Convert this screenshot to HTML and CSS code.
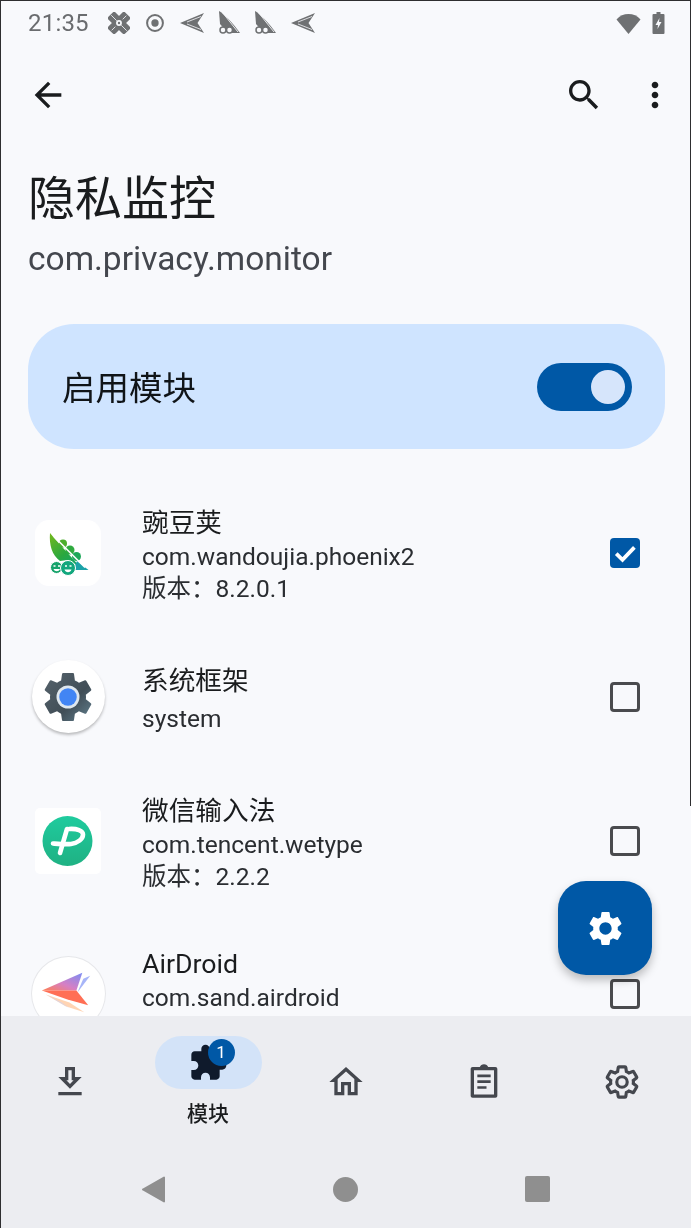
FILE: index.html
```html
<!DOCTYPE html>
<html lang="zh">
<head>
<meta charset="utf-8">
<title>隐私监控</title>
<link rel="stylesheet" href="styles.css">
</head>
<body>
<div class="phone">
  <div class="edge edge-top"></div>
  <div class="edge edge-left"></div>
  <div class="edge edge-right"></div>

  <header class="status">
    <span class="clock">21:35</span>
    <svg class="st st-band" viewBox="0 0 24 24"><g transform="rotate(45 12 12)"><rect x="-1" y="6.500" width="26" height="11" rx="2.500"/><rect x="6.500" y="-1" width="11" height="26" rx="2.500"/></g><path d="M8 16 4 20M16 8 20 4M14.500 14.500 20.500 20.500M9.500 9.500 3.500 3.500" fill="none" stroke="#f8f9fc" stroke-width=".9"/><circle cx="12" cy="12" r="3.200" fill="#f8f9fc"/><circle cx="12" cy="12" r="1.300"/></svg>
    <svg class="st st-dot" viewBox="0 0 24 24"><circle cx="12" cy="12" r="9.500" fill="none" stroke-width="2.400"/><circle cx="12" cy="12" r="4.400"/></svg>
    <svg class="st st-plane" viewBox="0 0 24 20"><path d="M0 10 24 0 17.500 10 24 20z"/><path d="M7 9 21 3.500M7 11 21 16.500" stroke="#f8f9fc" stroke-width=".8"/></svg>
    <svg class="st st-glider" viewBox="0 0 22 24"><path d="M1 0C6 3 14 11 22 22H10L2 13z"/><path d="M4 1 20 21" stroke="#f8f9fc" stroke-width=".9"/><circle class="wheel" cx="5" cy="19" r="3"/><circle class="wheel" cx="11.500" cy="19" r="3"/></svg>
    <svg class="st st-glider" viewBox="0 0 22 24"><path d="M1 0C6 3 14 11 22 22H10L2 13z"/><path d="M4 1 20 21" stroke="#f8f9fc" stroke-width=".9"/><circle class="wheel" cx="5" cy="19" r="3"/><circle class="wheel" cx="11.500" cy="19" r="3"/></svg>
    <svg class="st st-plane" viewBox="0 0 24 20"><path d="M0 10 24 0 17.500 10 24 20z"/><path d="M7 9 21 3.500M7 11 21 16.500" stroke="#f8f9fc" stroke-width=".8"/></svg>
    <span class="status-fill"></span>
    <svg class="st-wifi" viewBox="0 0 24 21"><path d="M0 6.500C3.200 2.800 7.400 1 12 1s8.800 1.800 12 5.500L12 21z"/></svg>
    <svg class="st-batt" viewBox="0 0 12 22"><path d="M4 0h4v2h3a1 1 0 0 1 1 1v18a1 1 0 0 1-1 1H1a1 1 0 0 1-1-1V3a1 1 0 0 1 1-1h3z"/><path d="M7 6 3 13h2.500l-.5 4 4-7H6.500z" fill="#f8f9fc"/></svg>
  </header>

  <main class="content">
    <div class="appbar">
      <svg class="ic40" viewBox="0 0 24 24"><path d="M20 11H7.830l5.590-5.590L12 4l-8 8 8 8 1.410-1.410L7.830 13H20v-2z"/></svg>
      <span class="appbar-fill"></span>
      <svg class="ic40" viewBox="0 0 24 24"><path d="M15.500 14h-.79l-.28-.27C15.410 12.590 16 11.110 16 9.500 16 5.910 13.090 3 9.500 3S3 5.910 3 9.500 5.910 16 9.500 16c1.610 0 3.090-.59 4.230-1.570l.27.28v.79l5 4.990L20.490 19l-4.990-5zm-6 0C7.010 14 5 11.990 5 9.500S7.010 5 9.500 5 14 7.010 14 9.500 11.990 14 9.500 14z"/></svg>
      <svg class="ic40" viewBox="0 0 24 24"><path d="M12 8c1.100 0 2-.9 2-2s-.9-2-2-2-2 .9-2 2 .9 2 2 2zm0 2c-1.100 0-2 .9-2 2s.9 2 2 2 2-.9 2-2-.9-2-2-2zm0 6c-1.100 0-2 .9-2 2s.9 2 2 2 2-.9 2-2-.9-2-2-2z"/></svg>
    </div>

    <h1 class="title">隐私监控</h1>
    <p class="subtitle">com.privacy.monitor</p>

    <section class="enable-card">
      <span class="enable-label">启用模块</span>
      <span class="switch"><span class="thumb"></span></span>
    </section>

    <ul class="apps">
      <li class="app">
        <span class="slot">
          <span class="tile">
            <svg class="logo" viewBox="0 0 66 66">
              <defs><linearGradient id="pea" x1="0" y1="0" x2=".7" y2="1"><stop offset="0" stop-color="#74b81c"/><stop offset=".6" stop-color="#2aa83f"/><stop offset="1" stop-color="#12a56e"/></linearGradient></defs>
              <circle cx="28" cy="23.500" r="4" fill="#4dae2c"/>
              <circle cx="35" cy="30" r="4.500" fill="#2faa3f"/>
              <circle cx="41.500" cy="36.500" r="4.500" fill="#1ea85a"/>
              <path d="M15 13C14 25 17 35 25 41L33 40 43 46 47 49 20 19z" fill="url(#pea)"/>
              <path d="M42 41 53.500 50H38z" fill="#1ba2a8"/>
              <path d="M19 16.500 50 47.500" stroke="#fff" stroke-width="1.600" fill="none"/>
              <circle cx="21.500" cy="47.500" r="6" fill="#17a36b" stroke="#fff" stroke-width="1"/>
              <circle cx="33" cy="48" r="7.500" fill="#12a77d" stroke="#fff" stroke-width="1"/>
              <path d="M18.500 46h2M23 46h2M30 46h2M34.500 46h2" stroke="#fff" stroke-width="1.400"/>
              <path d="M18.500 49c1 3 5.500 3 6.500 0zM29.500 49.500c1 3.500 6 3.500 7 0z" fill="#fff"/>
            </svg>
          </span>
        </span>
        <div class="meta">
          <div class="app-name">豌豆荚</div>
          <div class="pkg">com.wandoujia.phoenix2</div>
          <div class="pkg">版本：8.2.0.1</div>
        </div>
        <span class="check on"><svg viewBox="0 0 24 24"><path d="M5 12.500 10 17.500 19.500 7.500" fill="none" stroke="#fff" stroke-width="3"/></svg></span>
      </li>

      <li class="app app-short">
        <span class="slot">
          <span class="round shadowed">
            <svg class="logo-round" viewBox="0 0 24 24">
              <defs><linearGradient id="gear" x1="0" y1="0" x2="1" y2="1"><stop offset="0" stop-color="#56636c"/><stop offset=".6" stop-color="#414e57"/><stop offset="1" stop-color="#62808f"/></linearGradient></defs>
              <path fill="url(#gear)" d="M19.140 12.940c.04-.3.060-.61.060-.94 0-.32-.02-.64-.07-.94l2.030-1.580c.18-.14.23-.41.120-.61l-1.920-3.320c-.12-.22-.37-.29-.59-.22l-2.390.96c-.5-.38-1.030-.7-1.620-.94l-.36-2.540c-.04-.24-.24-.41-.48-.41h-3.840c-.24 0-.43.17-.47.41l-.36 2.540c-.59.24-1.130.57-1.620.94l-2.390-.96c-.22-.08-.47 0-.59.22L2.740 8.870c-.12.21-.08.47.12.61l2.030 1.580c-.05.3-.09.63-.09.94s.02.64.07.94l-2.030 1.580c-.18.14-.23.41-.12.61l1.920 3.320c.12.22.37.29.59.22l2.390-.96c.5.38 1.030.7 1.620.94l.36 2.540c.05.24.24.41.48.41h3.840c.24 0 .44-.17.47-.41l.36-2.540c.59-.24 1.130-.56 1.620-.94l2.390.96c.22.08.47 0 .59-.22l1.920-3.320c.12-.22.070-.47-.12-.61l-2.010-1.580z"/>
              <circle cx="12" cy="12" r="4.600" fill="#dfe7ee"/>
              <circle cx="12" cy="12" r="3.500" fill="#4285f4"/>
            </svg>
          </span>
        </span>
        <div class="meta">
          <div class="app-name">系统框架</div>
          <div class="pkg">system</div>
        </div>
        <span class="check"></span>
      </li>

      <li class="app">
        <span class="slot">
          <span class="tile tile-square">
            <svg class="logo" viewBox="0 0 66 66">
              <defs><linearGradient id="wt" x1="0" y1="0" x2="0" y2="1"><stop offset="0" stop-color="#1fcb9e"/><stop offset="1" stop-color="#1fb183"/></linearGradient></defs>
              <circle cx="32.500" cy="33" r="25" fill="url(#wt)"/>
              <path d="M32 21 25 45" stroke="#fff" stroke-width="4.600" stroke-linecap="round" fill="none"/>
              <path d="M18 35.500C25 36 31 36.500 36 36 43 35 48 31 48 26.500 48 22.500 42 20.500 34 21" stroke="#fff" stroke-width="4.600" stroke-linecap="round" fill="none"/>
            </svg>
          </span>
        </span>
        <div class="meta">
          <div class="app-name">微信输入法</div>
          <div class="pkg">com.tencent.wetype</div>
          <div class="pkg">版本：2.2.2</div>
        </div>
        <span class="check"></span>
      </li>

      <li class="app">
        <span class="slot">
          <span class="round outlined">
            <svg class="logo" viewBox="0 0 74 74">
              <defs><linearGradient id="ad" x1="1" y1="0" x2="0" y2="1"><stop offset="0" stop-color="#7a8df5"/><stop offset=".55" stop-color="#d67fc4"/><stop offset="1" stop-color="#ff7f50"/></linearGradient></defs>
              <path d="M52 22 59 19 46 36z" fill="#8a9cf5" opacity=".75"/>
              <path d="M14 38 38 46 53 56 34 50z" fill="#ffc59a" opacity=".75"/>
              <path d="M14 38 30 46 38 52z" fill="#c9d2fa" opacity=".7"/>
              <path d="M10 34 51 16 45 34z" fill="url(#ad)"/>
              <path d="M10 34H45L57 49 36 43z" fill="#ff6f55"/>
            </svg>
          </span>
        </span>
        <div class="meta meta-clipped">
          <div class="app-name">AirDroid</div>
          <div class="pkg">com.sand.airdroid</div>
        </div>
        <span class="check"></span>
      </li>
    </ul>

    <button class="fab" type="button" aria-label="设置">
      <svg viewBox="0 0 24 24"><path fill-rule="evenodd" d="M19.140 12.940c.04-.3.060-.61.060-.94 0-.32-.02-.64-.07-.94l2.030-1.580c.18-.14.23-.41.120-.61l-1.920-3.320c-.12-.22-.37-.29-.59-.22l-2.390.96c-.5-.38-1.030-.7-1.620-.94l-.36-2.540c-.04-.24-.24-.41-.48-.41h-3.840c-.24 0-.43.17-.47.41l-.36 2.540c-.59.24-1.130.57-1.620.94l-2.390-.96c-.22-.08-.47 0-.59.22L2.740 8.870c-.12.21-.08.47.12.61l2.030 1.580c-.05.3-.09.63-.09.94s.02.64.07.94l-2.030 1.580c-.18.14-.23.41-.12.61l1.920 3.320c.12.22.37.29.59.22l2.390-.96c.5.38 1.030.7 1.620.94l.36 2.540c.05.24.24.41.48.41h3.840c.24 0 .44-.17.47-.41l.36-2.540c.59-.24 1.130-.56 1.620-.94l2.390.96c.22.08.47 0 .59-.22l1.920-3.320c.12-.22.070-.47-.12-.61l-2.010-1.580zM12 15.600c-1.980 0-3.600-1.620-3.600-3.600s1.620-3.600 3.600-3.600 3.600 1.620 3.600 3.600-1.620 3.600-3.600 3.600z"/></svg>
    </button>
  </main>

  <footer class="bottom">
    <nav class="tabs">
      <div class="tab">
        <svg class="ic40 muted" viewBox="0 0 24 24"><path d="M19 9h-4V3H9v6H5l7 7 7-7zm-8 2V5h2v6h1.170L12 13.170 9.830 11H11zm-6 7h14v2H5z"/></svg>
      </div>
      <div class="tab tab-active">
        <span class="pill">
          <svg class="ic40 dark" viewBox="0 0 24 24"><path d="M20.500 11H19V7c0-1.100-.9-2-2-2h-4V3.500C13 2.120 11.880 1 10.500 1S8 2.120 8 3.500V5H4c-1.100 0-1.990.9-1.990 2v3.800H3.500c1.490 0 2.700 1.210 2.700 2.700s-1.210 2.700-2.700 2.700H2V20c0 1.100.9 2 2 2h3.800v-1.500c0-1.490 1.210-2.700 2.700-2.700 1.490 0 2.700 1.210 2.700 2.700V22H17c1.100 0 2-.9 2-2v-4h1.500c1.380 0 2.500-1.120 2.500-2.500S21.880 11 20.500 11z"/></svg>
          <span class="badge">1</span>
        </span>
        <span class="tab-label">模块</span>
      </div>
      <div class="tab">
        <svg class="ic40 muted" viewBox="0 0 24 24"><path d="M12 5.690l5 4.500V18h-2v-6H9v6H7v-7.810l5-4.500M12 3L2 12h3v8h6v-6h2v6h6v-8h3L12 3z"/></svg>
      </div>
      <div class="tab">
        <svg class="ic40 muted" viewBox="0 0 24 24"><path fill-rule="evenodd" d="M9.500 3H5.200C4.500 3 4 3.500 4 4.200v16.100c0 .7.5 1.200 1.200 1.200h13.600c.7 0 1.200-.5 1.200-1.200V4.200C20 3.500 19.500 3 18.800 3h-4.300C14.200 2 13.200 1.300 12 1.300S9.800 2 9.500 3zM6 5h12v14.500H6z"/><path d="M8 7.500h8v1.600H8zM8 11h8v1.600H8zM8 14.500h5.500v1.600H8z"/></svg>
      </div>
      <div class="tab">
        <svg class="ic38 muted-line" viewBox="0 0 24 24"><path d="M19.140 12.940c.04-.3.060-.61.060-.94 0-.32-.02-.64-.07-.94l2.030-1.580c.18-.14.23-.41.120-.61l-1.920-3.320c-.12-.22-.37-.29-.59-.22l-2.390.96c-.5-.38-1.030-.7-1.620-.94l-.36-2.540c-.04-.24-.24-.41-.48-.41h-3.840c-.24 0-.43.17-.47.41l-.36 2.540c-.59.24-1.130.57-1.620.94l-2.390-.96c-.22-.08-.47 0-.59.22L2.740 8.870c-.12.21-.08.47.12.61l2.030 1.580c-.05.3-.09.63-.09.94s.02.64.07.94l-2.030 1.580c-.18.14-.23.41-.12.61l1.920 3.320c.12.22.37.29.59.22l2.390-.96c.5.38 1.030.7 1.620.94l.36 2.540c.05.24.24.41.48.41h3.840c.24 0 .44-.17.47-.41l.36-2.540c.59-.24 1.130-.56 1.620-.94l2.390.96c.22.08.47 0 .59-.22l1.920-3.320c.12-.22.070-.47-.12-.61l-2.010-1.580z"/><circle cx="12" cy="12" r="3.300"/></svg>
      </div>
    </nav>
    <div class="sysbar">
      <svg class="sys sys-back" viewBox="0 0 24 28"><path d="M24 1.500a1 1 0 0 0-1.500-.9L1 13a1 1 0 0 0 0 2l21.500 12.400a1 1 0 0 0 1.500-.9z"/></svg>
      <span class="sys sys-home"></span>
      <span class="sys sys-recent"></span>
    </div>
  </footer>
</div>
</body>
</html>
```

FILE: styles.css
```css
* { box-sizing: border-box; }

html, body {
  margin: 0;
  padding: 0;
  background: #f8f9fc;
}

body {
  font-family: Roboto, "Noto Sans CJK SC", sans-serif;
  color: #1a1c1e;
}

.phone {
  position: relative;
  width: 691px;
  height: 1228px;
  overflow: hidden;
  display: flex;
  flex-direction: column;
  background: #f8f9fc;
  filter: blur(.35px);
}

.edge { position: absolute; background: #2e2e30; z-index: 5; }
.edge-top { left: 0; top: 0; width: 100%; height: 1px; }
.edge-left { left: 0; top: 0; width: 1px; height: 100%; }
.edge-right { right: 0; top: 0; width: 1px; height: 806px; }

/* status bar */
.status {
  height: 46px;
  flex: none;
  display: flex;
  align-items: center;
  padding: 0 26px 0 28px;
  fill: #6f7173;
  stroke: #6f7173;
  stroke-width: 0;
}
.clock { font-size: 24px; color: #6a6c6f; width: 60px; letter-spacing: .2px; }
.st { flex: none; }
.st-band { width: 22px; height: 22px; margin-left: 20px; }
.st-dot { width: 20px; height: 20px; margin-left: 15px; }
.st-plane { width: 24px; height: 20px; margin-left: 15px; }
.st-glider { width: 22px; height: 24px; margin-left: 14px; }
.st-glider + .st-plane { margin-left: 15px; }
.wheel { fill: #f8f9fc; stroke-width: 1.500; }
.status-fill { flex: 1; }
.st-wifi { width: 25px; height: 21px; }
.st-batt { width: 13px; height: 22px; margin-left: 11px; }

/* main */
.content {
  position: relative;
  flex: 1;
  min-height: 0;
  overflow: hidden;
}

.appbar {
  height: 98px;
  display: flex;
  align-items: center;
  gap: 31px;
  padding: 0 16px 0 28px;
  fill: #1a1c1e;
}
.appbar-fill { flex: 1; }
.ic40 { width: 40px; height: 40px; flex: none; }
.ic38 { width: 38px; height: 38px; flex: none; }

.title {
  margin: 24px 0 0 28px;
  font-size: 47px;
  line-height: 62px;
  font-weight: 400;
}
.subtitle {
  margin: 9px 0 0 28px;
  font-size: 33.500px;
  line-height: 40px;
  color: #44474e;
}

.enable-card {
  margin: 45px 26px 0 28px;
  height: 125px;
  border-radius: 46px;
  background: #cfe4ff;
  display: flex;
  align-items: center;
  justify-content: space-between;
  padding: 0 33px 0 34px;
}
.enable-label { font-size: 33.500px; color: #101418; padding-bottom: 3px; }
.switch {
  width: 95px;
  height: 48px;
  border-radius: 24px;
  background: #0058a6;
  display: flex;
  align-items: center;
  justify-content: flex-end;
  padding-right: 7px;
}
.thumb {
  width: 34px;
  height: 34px;
  border-radius: 50%;
  background: #d6e5fb;
}

/* list */
.apps {
  list-style: none;
  margin: 27px 0 0;
  padding: 0;
}
.app {
  height: 153px;
  display: flex;
  align-items: center;
  padding: 0 51px 0 31px;
}
.app-short { height: 135px; }
.slot {
  width: 74px;
  flex: none;
  display: flex;
  justify-content: center;
}
.tile {
  width: 66px;
  height: 66px;
  border-radius: 14px;
  background: #fff;
  display: block;
}
.tile-square { border-radius: 5px; }
.logo { display: block; width: 100%; height: 100%; }
.round {
  width: 73px;
  height: 73px;
  border-radius: 50%;
  background: #fff;
  display: flex;
  align-items: center;
  justify-content: center;
}
.shadowed { box-shadow: 0 2px 3px rgba(0,0,0,.25); }
.outlined { box-shadow: 0 0 0 1px #e6e7ea; }
.logo-round { width: 60px; height: 60px; display: block; }
.meta {
  flex: 1;
  margin-left: 37px;
  min-width: 0;
  padding-top: 4px;
}
.meta-clipped { padding-bottom: 32px; }
.app-name { font-size: 26.700px; line-height: 36px; color: #1a1c1e; }
.pkg { font-size: 24.500px; line-height: 32px; color: #2a2d31; }
.app-short .pkg { margin-top: 4px; }
.check {
  width: 30px;
  height: 30px;
  flex: none;
  border: 3.500px solid #4a4b4e;
  border-radius: 4px;
}
.check.on {
  background: #0058a6;
  border: 0;
}
.check svg { display: block; width: 100%; height: 100%; }

.fab {
  position: absolute;
  right: 39px;
  top: 835px;
  width: 94px;
  height: 94px;
  padding: 0;
  border: 0;
  border-radius: 28px;
  background: #0058a6;
  box-shadow: 0 5px 10px rgba(0,0,0,.25);
  display: flex;
  align-items: center;
  justify-content: center;
  fill: #fff;
}
.fab svg { width: 41px; height: 41px; display: block; }

/* bottom */
.bottom {
  height: 212px;
  flex: none;
  background: #ecedf1;
  padding-top: 20px;
  display: flex;
  flex-direction: column;
}
.tabs {
  height: 92px;
  flex: none;
  display: grid;
  grid-template-columns: repeat(5, 1fr);
  padding-left: 1px;
}
.tab {
  display: flex;
  flex-direction: column;
  align-items: center;
  justify-content: center;
}
.tab-active { justify-content: flex-start; }
.muted { fill: #44474e; }
.dark { fill: #0f1a2c; }
.muted-line { fill: none; stroke: #44474e; stroke-width: 2; }
.pill {
  position: relative;
  width: 107px;
  height: 53px;
  border-radius: 27px;
  background: #d3e3f8;
  display: flex;
  align-items: center;
  justify-content: center;
}
.badge {
  position: absolute;
  left: 53px;
  top: 3px;
  width: 27px;
  height: 27px;
  border-radius: 50%;
  background: #0058a6;
  color: #fff;
  font-size: 17px;
  line-height: 27px;
  text-align: center;
}
.tab-label {
  margin-top: 11px;
  font-size: 21px;
  line-height: 28px;
  font-weight: 500;
  color: #1a1c1e;
}
.sysbar {
  flex: 1;
  display: flex;
  align-items: center;
  padding: 22px 141px 0 142px;
  justify-content: space-between;
}
.sys { display: block; flex: none; }
.sys-back { width: 23px; height: 27px; fill: #8f8f8f; }
.sys-home { width: 25px; height: 25px; border-radius: 50%; background: #8f8f8f; }
.sys-recent { width: 25px; height: 26px; border-radius: 2px; background: #8f8f8f; }
```
